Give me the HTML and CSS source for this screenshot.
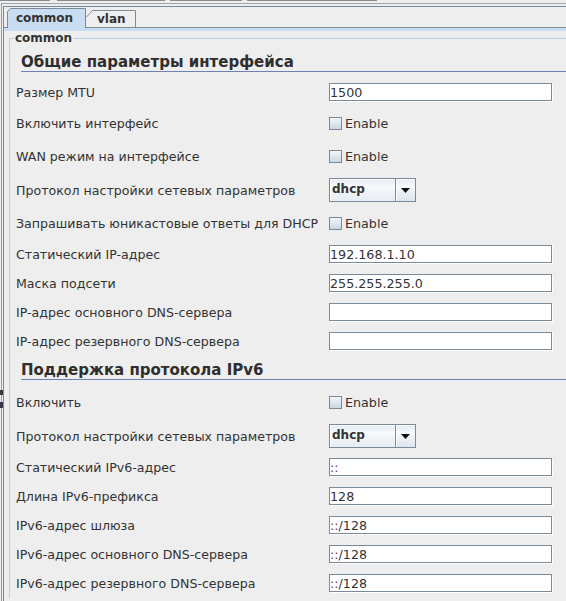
FILE: index.html
```html
<!DOCTYPE html>
<html lang="ru">
<head>
<meta charset="utf-8">
<title>common</title>
<link rel="stylesheet" href="styles.css">
</head>
<body>
<div class="strip"><span class="s1"></span><span class="s2"></span><span class="s3"></span><span class="s4"></span></div>
<div class="frame">
  <div class="tabpane">
    <div class="tabs">
      <div class="tab tab-sel">
        <svg class="tab-shape" width="79" height="20" viewBox="0 0 79 20"><polygon points="0,20 0,3 3,0 79,0 79,20" fill="#c8ddf2"/><path d="M0.5 20 V3.5 L3.5 0.5 H78.5 V20" fill="none" stroke="#7a8a99"/></svg>
        <span class="tab-label">common</span>
      </div>
      <div class="tab tab-off">
        <svg class="tab-shape" width="50" height="17" viewBox="0 0 50 17"><path d="M0 7.5 L6.5 0.5 H49.5 V17" fill="none" stroke="#7a8a99"/></svg>
        <span class="tab-label">vlan</span>
      </div>
    </div>
    <div class="band"></div>
    <fieldset class="group">
      <legend class="group-title">common</legend>

      <h2 class="section first">Общие параметры интерфейса</h2>
      <div class="row row-text"><span class="label">Размер MTU</span><span class="field">1500</span></div>
      <div class="row row-check"><span class="label">Включить интерфейс</span><span class="check"><span class="box"></span><span class="check-text">Enable</span></span></div>
      <div class="row row-check"><span class="label">WAN режим на интерфейсе</span><span class="check"><span class="box"></span><span class="check-text">Enable</span></span></div>
      <div class="row row-combo"><span class="label">Протокол настройки сетевых параметров</span><span class="combo"><span class="combo-text">dhcp</span><span class="combo-btn"><svg width="9" height="5" viewBox="0 0 9 5"><polygon points="0,0 9,0 4.5,5" fill="#111"/></svg></span></span></div>
      <div class="row row-check"><span class="label">Запрашивать юникастовые ответы для DHCP</span><span class="check"><span class="box"></span><span class="check-text">Enable</span></span></div>
      <div class="row row-text"><span class="label">Статический IP-адрес</span><span class="field">192.168.1.10</span></div>
      <div class="row row-text"><span class="label">Маска подсети</span><span class="field">255.255.255.0</span></div>
      <div class="row row-text"><span class="label">IP-адрес основного DNS-сервера</span><span class="field"></span></div>
      <div class="row row-text"><span class="label">IP-адрес резервного DNS-сервера</span><span class="field"></span></div>

      <h2 class="section">Поддержка протокола IPv6</h2>
      <div class="row row-check"><span class="label">Включить</span><span class="check"><span class="box"></span><span class="check-text">Enable</span></span></div>
      <div class="row row-combo"><span class="label">Протокол настройки сетевых параметров</span><span class="combo"><span class="combo-text">dhcp</span><span class="combo-btn"><svg width="9" height="5" viewBox="0 0 9 5"><polygon points="0,0 9,0 4.5,5" fill="#111"/></svg></span></span></div>
      <div class="row row-text"><span class="label">Статический IPv6-адрес</span><span class="field"><span class="colons">::</span></span></div>
      <div class="row row-text"><span class="label">Длина IPv6-префикса</span><span class="field">128</span></div>
      <div class="row row-text"><span class="label">IPv6-адрес шлюза</span><span class="field"><span class="colons">::</span>/128</span></div>
      <div class="row row-text"><span class="label">IPv6-адрес основного DNS-сервера</span><span class="field"><span class="colons">::</span>/128</span></div>
      <div class="row row-text"><span class="label">IPv6-адрес резервного DNS-сервера</span><span class="field"><span class="colons">::</span>/128</span></div>
    </fieldset>
  </div>
</div>
<div class="edge-mark m1"></div>
<div class="edge-mark m2"></div>
</body>
</html>
```

FILE: styles.css
```css
html, body {
  margin: 0;
  padding: 0;
}
body {
  background: #eeeeee;
  font-family: "DejaVu Sans", "Noto Sans", sans-serif;
  color: #333333;
  height: 601px;
  overflow: hidden;
  position: relative;
}

/* remnants of outer tab strip */
.strip {
  display: flex;
  height: 1px;
}
.strip span {
  height: 1px;
  background: #8c8c8c;
}
.strip .s1 { width: 50px; }
.strip .s2 { width: 108px; margin-left: 7px; }
.strip .s3 { width: 72px; margin-left: 5px; }
.strip .s4 { width: 130px; margin-left: 5px; }

.frame {
  margin: 2px 0 0 1px;
  border-left: 1px solid #8d9bb0;
  border-top: 1px solid #9ea6af;
  padding: 2px 0 0 1px;
  min-height: 600px;
}
.tabpane {
  border-left: 1px solid #7a8a99;
  border-top: 1px solid #7a8a99;
  padding-top: 1px;
  min-height: 600px;
}

/* tabs */
.tabs {
  display: flex;
  align-items: flex-end;
  height: 19px;
  padding-left: 3px;
  border-bottom: 1px solid #7a8a99;
}
.tab {
  position: relative;
  box-sizing: border-box;
  font-size: 12px;
  font-weight: bold;
  color: #333333;
}
.tab-shape {
  position: absolute;
  left: 0;
  top: 0;
  display: block;
}
.tab-label {
  position: relative;
}
.tab-sel {
  width: 79px;
  height: 20px;
  margin-bottom: -1px;
  line-height: 21px;
  padding-left: 9px;
  z-index: 1;
}
.tab-off {
  width: 50px;
  height: 17px;
  line-height: 18px;
  padding-left: 11px;
}
.band {
  height: 3px;
  background: #c8ddf2;
}

/* titled border */
.group {
  margin: 0 0 0 5px;
  padding: 0 0 0 6px;
  border-style: solid;
  border-color: #b8cfe5;
  border-width: 1px 0 0 1px;
  min-width: 0;
}
.group-title {
  margin-left: -2px;
  padding: 0 1px;
  font-size: 12px;
  font-weight: bold;
  line-height: 14px;
  color: #333333;
}

.section {
  margin: 6px 0 6px 5px;
  padding: 0;
  font-size: 15px;
  font-weight: bold;
  line-height: 17px;
  color: #2e2e2e;
  border-bottom: 1px solid #6d82b0;
}
.section.first {
  margin-top: 9px;
}

/* form rows */
.row {
  display: flex;
  align-items: center;
}
.row-text { height: 29px; }
.row-check { height: 33px; }
.row-combo { height: 34px; }

.label {
  flex: none;
  width: 313px;
  font-size: 12.6px;
  line-height: 15px;
  color: #333333;
  white-space: nowrap;
}

.field {
  align-self: flex-start;
  margin-top: 5px;
  box-sizing: border-box;
  width: 223px;
  height: 18px;
  border: 1px solid #7a8a99;
  box-shadow: 1px 1px 0 #ffffff;
  background: #ffffff;
  padding: 1px 0 0 0;
  font-size: 12.7px;
  line-height: 15px;
  color: #333333;
  white-space: nowrap;
}
.colons {
  color: #6e3c68;
}

.check {
  display: flex;
  align-items: center;
}
.box {
  box-sizing: border-box;
  width: 13px;
  height: 13px;
  border: 1px solid #7a8a99;
  background: linear-gradient(#f3f6fa, #e2eaf2 40%, #c9d7e6);
}
.check-text {
  margin-left: 3px;
  font-size: 12.7px;
  line-height: 15px;
  color: #333333;
}

.combo {
  box-sizing: border-box;
  display: flex;
  width: 87px;
  height: 24px;
  border: 1px solid #7a8a99;
}
.combo-text {
  flex: 1;
  padding-left: 2px;
  font-size: 12px;
  font-weight: bold;
  line-height: 20px;
  color: #333333;
  background: linear-gradient(#e4ecf4, #f7f9fc 35%, #e6edf4);
  box-shadow: inset 1px 1px 0 #ffffff;
}
.combo-btn {
  width: 19px;
  border-left: 1px solid #7a8a99;
  display: flex;
  align-items: center;
  justify-content: center;
  background: linear-gradient(#e4ecf4, #f7f9fc 35%, #dce5ee);
  box-shadow: inset 1px 1px 0 #ffffff;
}
.combo-btn svg {
  display: block;
}

/* small dark marks cut off at the left edge */
.edge-mark {
  position: absolute;
  left: 0;
  width: 3px;
  background: #353a48;
}
.edge-mark.m1 { top: 390px; height: 5px; }
.edge-mark.m2 { top: 402px; height: 6px; }
```
